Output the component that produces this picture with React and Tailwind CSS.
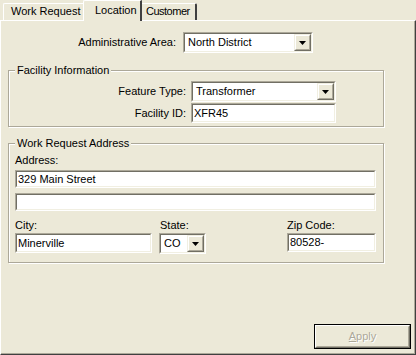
import React from "react";

function Sunken({ className, children }) {
  return (
    <div className={`border border-t-[#ACA899] border-l-[#ACA899] border-r-white border-b-white ${className}`}>
      <div className="h-full border border-t-[#716F64] border-l-[#716F64] border-r-[#F1EFE2] border-b-[#F1EFE2] bg-white flex items-center">
        {children}
      </div>
    </div>
  );
}

function Arrow() {
  return (
    <svg width="7" height="4" viewBox="0 0 7 4">
      <polygon points="0,0 7,0 3.5,4" fill="#000" />
    </svg>
  );
}

function Dropdown({ className, value }) {
  return (
    <Sunken className={className}>
      <span className="flex-1 pl-[3px] whitespace-nowrap overflow-hidden">{value}</span>
      <div className="w-[17px] h-full border border-t-[#F1EFE2] border-l-[#F1EFE2] border-r-[#716F64] border-b-[#716F64] bg-[#ECE9D8]">
        <div className="h-full border border-t-white border-l-white border-r-[#ACA899] border-b-[#ACA899] flex items-center justify-center">
          <Arrow />
        </div>
      </div>
    </Sunken>
  );
}

function TextBox({ className, value }) {
  return (
    <Sunken className={className}>
      <span className="pl-[1px] whitespace-nowrap">{value}</span>
    </Sunken>
  );
}

function GroupBox({ title, className, children }) {
  return (
    <div className={`relative border border-[#ACA899] shadow-[1px_1px_0_white,inset_1px_1px_0_white] w-[376px] ${className}`}>
      <span className="absolute left-[6px] -top-[7px] px-[2px] bg-[#ECE9D8] leading-[13px]">{title}</span>
      {children}
    </div>
  );
}

export default function App() {
  return (
    <div className="w-[416px] h-[355px] bg-[#ECE9D8] flex flex-col font-['Liberation_Sans',Arial,sans-serif] text-[11px] leading-[13px] text-black">
      {/* Tabs */}
      <div className="h-[20px] flex items-end pl-[3px] relative z-10">
        <div className="w-[80px] h-[17px] border-l border-t border-l-white border-t-white rounded-tl-[2px] pl-[7px] pt-[1px] whitespace-nowrap">
          Work Request
        </div>
        <div className="w-[59px] h-[21px] -mb-[1px] bg-[#ECE9D8] border-l border-t border-l-white border-t-white border-r-2 border-r-[#404040] rounded-tl-[2px] pl-[11px] pt-[3px] whitespace-nowrap">
          Location
        </div>
        <div className="w-[55px] h-[17px] border-t border-t-white border-r-2 border-r-[#404040] rounded-tr-[2px] pl-[4px] pt-[1px] whitespace-nowrap tracking-[-0.5px]">
          Customer
        </div>
      </div>

      {/* Panel */}
      <div className="flex-1 flex flex-col border-l border-t border-l-white border-t-white border-r border-b border-r-[#404040] border-b-[#404040]">
        <div className="flex-1 flex flex-col border-r border-b border-r-[#ACA899] border-b-[#ACA899]">
          <div className="pl-[7px] flex flex-col">
            <div className="flex items-center mt-[11px]">
              <div className="w-[168px] text-right whitespace-nowrap">Administrative Area:</div>
              <Dropdown className="ml-[7px] w-[130px] h-[21px]" value="North District" />
            </div>

            <GroupBox title="Facility Information" className="mt-[17px] h-[57px] pt-[10px]">
              <div className="flex items-center">
                <div className="w-[177px] text-right whitespace-nowrap">Feature Type:</div>
                <Dropdown className="ml-[5px] w-[145px] h-[21px]" value="Transformer" />
              </div>
              <div className="flex items-center mt-[1px]">
                <div className="w-[177px] text-right whitespace-nowrap">Facility ID:</div>
                <TextBox className="ml-[5px] w-[145px] h-[20px]" value="XFR45" />
              </div>
            </GroupBox>

            <GroupBox title="Work Request Address" className="mt-[16px] h-[120px] pt-[10px] pl-[6px]">
              <div>Address:</div>
              <TextBox className="mt-[3px] w-[361px] h-[18px]" value="329 Main Street" />
              <TextBox className="mt-[5px] w-[361px] h-[18px]" value="" />
              <div className="flex mt-[8px]">
                <div className="flex flex-col w-[137px]">
                  <div>City:</div>
                  <TextBox className="mt-[1px] h-[20px]" value="Minerville" />
                </div>
                <div className="flex flex-col w-[47px] ml-[7px]">
                  <div className="pl-[1px]">State:</div>
                  <Dropdown className="mt-[1px] h-[21px]" value="CO" />
                </div>
                <div className="flex flex-col w-[89px] ml-[81px]">
                  <div>Zip Code:</div>
                  <TextBox className="mt-[1px] h-[19px]" value="80528-" />
                </div>
              </div>
            </GroupBox>
          </div>

          <div className="flex-1" />

          <div className="flex justify-end pr-[3px] pb-[4px]">
            <div className="w-[97px] h-[25px] border border-black">
              <div className="h-full border border-t-white border-l-white border-r-[#716F64] border-b-[#716F64]">
                <div className="h-full border border-t-[#ECE9D8] border-l-[#ECE9D8] border-r-[#ACA899] border-b-[#ACA899] flex items-center justify-center text-[#ACA899] [text-shadow:1px_1px_0_white]">
                  <span><span className="underline">A</span>pply</span>
                </div>
              </div>
            </div>
          </div>
        </div>
      </div>
    </div>
  );
}
